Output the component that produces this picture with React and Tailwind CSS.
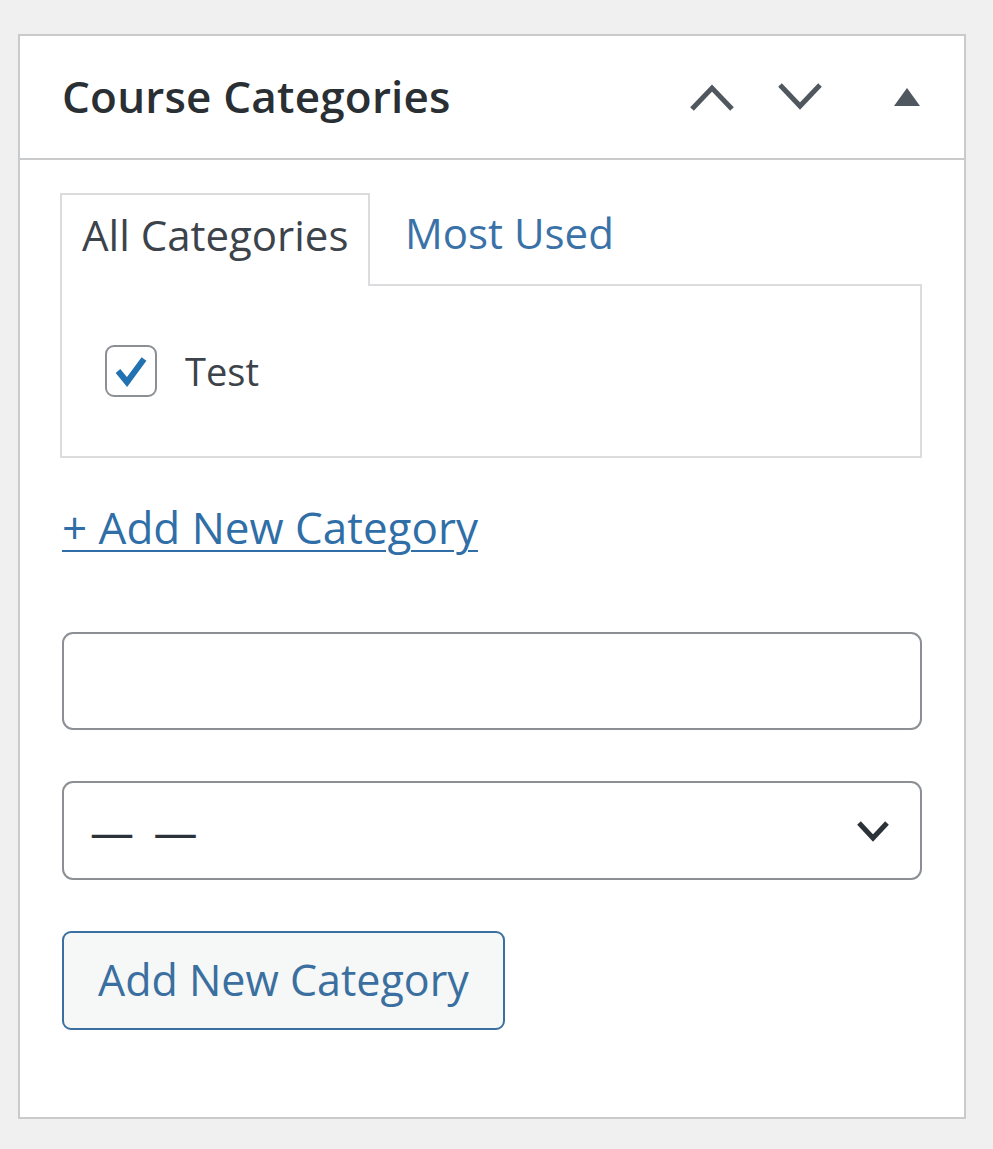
export default function App() {
  return (
    <div
      className="min-h-screen bg-[#f0f0f1] pt-[34px] pl-[18px]"
      style={{ fontFamily: '"Open Sans", "Noto Sans", sans-serif' }}
    >
      <div className="w-[948px] h-[1085px] bg-white border-2 border-[#c9cacc]">
        {/* header */}
        <div className="h-[124px] flex items-center justify-between border-b-2 border-[#c9cacc] pl-[42px] pr-[44px]">
          <h2 className="text-[44px] font-semibold text-[#2a2f33] tracking-[0.2px] -mt-[3px]">Course Categories</h2>
          <div className="flex items-center">
            <svg width="48" height="30" viewBox="0 0 48 30" className="mr-[40px]">
              <path d="M4 27 L24 6 L44 27" fill="none" stroke="#50575e" strokeWidth="5" />
            </svg>
            <svg width="48" height="30" viewBox="0 0 48 30" className="mr-[70px]">
              <path d="M4 3 L24 24 L44 3" fill="none" stroke="#50575e" strokeWidth="5" />
            </svg>
            <svg width="26" height="18" viewBox="0 0 26 18">
              <path d="M0 18 L13 0 L26 18 Z" fill="#50575e" />
            </svg>
          </div>
        </div>

        <div className="pl-[40px] pr-[42px] pt-[31px]">
          {/* tabs */}
          <div className="flex items-end">
            <div className="h-[93px] w-[310px] border-2 border-b-0 border-[#dcdcde] bg-white flex items-center pl-[20px] -mb-[2px] relative z-10">
              <span className="text-[42px] text-[#3c434a] -mt-[12px]">All Categories</span>
            </div>
            <div className="h-[93px] flex items-center pl-[35px]">
              <span className="text-[42px] text-[#3a72a8] -mt-[10px]">Most Used</span>
            </div>
          </div>
          <div className="h-[174px] border-2 border-[#dcdcde] flex items-center pl-[43px]">
            <div className="w-[52px] h-[52px] rounded-[9px] border-2 border-[#8c8f94] flex items-center justify-center bg-white">
              <svg width="40" height="40" viewBox="0 0 40 40">
                <path d="M7 20 L16 31 L33 8" fill="none" stroke="#2271b1" strokeWidth="6" />
              </svg>
            </div>
            <span className="ml-[28px] text-[38px] text-[#3c434a]">Test</span>
          </div>

          {/* add new link */}
          <div className="mt-[36px]">
            <a href="#" className="text-[44px] text-[#2f6ea6] underline underline-offset-[6px] decoration-2 pl-[2px]">
              + Add New Category
            </a>
          </div>

          {/* input */}
          <input
            type="text"
            className="block mt-[72px] w-[860px] h-[98px] ml-[2px] rounded-[11px] border-2 border-[#8c8f94] bg-white"
          />

          {/* select */}
          <div className="mt-[51px] ml-[2px] w-[860px] h-[99px] rounded-[11px] border-2 border-[#8c8f94] bg-white flex items-center justify-between pl-[26px] pr-[30px]">
            <span className="text-[44px] text-[#2c3338] tracking-[4px]">— —</span>
            <svg width="34" height="24" viewBox="0 0 34 24">
              <path d="M3 4 L17 19 L31 4" fill="none" stroke="#2c3338" strokeWidth="5" />
            </svg>
          </div>

          {/* button */}
          <button className="mt-[51px] ml-[2px] w-[443px] h-[99px] rounded-[9px] border-2 border-[#3a6f9f] bg-[#f6f7f7] text-[43px] text-[#3a6f9f] text-left pl-[34px]">
            Add New Category
          </button>
        </div>
      </div>
    </div>
  );
}
